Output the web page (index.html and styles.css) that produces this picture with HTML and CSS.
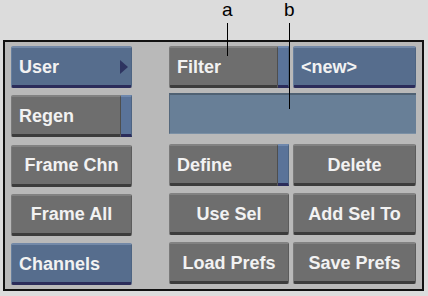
FILE: index.html
```html
<!DOCTYPE html>
<html>
    <head>
        <title>user prefs</title>
        <link rel="stylesheet" href="styles.css">
    </head>
    <body>
        <div class="callouts">
            <div class="callout ca"><span>a</span><i></i></div>
            <div class="callout cb"><span>b</span><i></i></div>
        </div>
        <div class="panel">
            <div class="left">
                <div class="btn blue start">User<span class="arrow"></span></div>
                <div class="btn start split"><span class="face">Regen</span><span class="ind"></span></div>
                <div class="btn">Frame Chn</div>
                <div class="btn">Frame All</div>
                <div class="btn blue start">Channels</div>
            </div>
            <div class="right">
                <div class="btn start split"><span class="face">Filter</span><span class="ind"></span></div>
                <div class="btn blue start">&lt;new&gt;</div>
                <div class="field"></div>
                <div class="btn start split"><span class="face">Define</span><span class="ind"></span></div>
                <div class="btn">Delete</div>
                <div class="btn">Use Sel</div>
                <div class="btn">Add Sel To</div>
                <div class="btn">Load Prefs</div>
                <div class="btn">Save Prefs</div>
            </div>
        </div>
    </body>
</html>
```

FILE: styles.css
```css
body {
    margin: 0;
    padding: 0;
    background: #dcdcdc;
    font-family: "Liberation Sans", Arial, sans-serif;
}

.callouts {
    position: relative;
    z-index: 1;
    height: 40px;
}

.callout {
    position: absolute;
    top: 0;
    display: flex;
    flex-direction: column;
    align-items: center;
    color: #000;
    font-size: 19px;
    line-height: 20px;
}

.callout i {
    display: block;
    width: 1px;
    margin-top: 3px;
    background: #000;
}

.ca {
    left: 222px;
}

.ca i {
    height: 33px;
}

.cb {
    left: 284px;
}

.cb i {
    height: 86px;
}

.panel {
    margin-left: 3px;
    width: 417px;
    height: 247px;
    border: 2px solid #111;
    background: #b9b9b9;
    display: flex;
}

.left {
    width: 121px;
    margin: 4px 37px 4px 6px;
    display: flex;
    flex-direction: column;
    justify-content: space-between;
}

.right {
    width: 247px;
    margin: 4px 0;
    display: grid;
    grid-template-columns: 120px 123px;
    grid-template-rows: repeat(5, 42px);
    column-gap: 4px;
    row-gap: 7px;
}

.btn {
    height: 42px;
    box-sizing: border-box;
    display: flex;
    align-items: center;
    justify-content: center;
    position: relative;
    background: #6e6e6e;
    border-top: 2px solid #828282;
    border-left: 1px solid #7a7a7a;
    border-right: 1px solid #5c5c5c;
    border-bottom: 3px solid #3c3c3c;
    border-radius: 2px;
    color: #f2f2f2;
    font-size: 18px;
    font-weight: bold;
    padding-top: 1px;
}

.btn.start {
    justify-content: flex-start;
    padding-left: 7px;
}

.btn.blue {
    background: #566d8d;
    border-top-color: #7389a8;
    border-left-color: #677f9e;
    border-right-color: #4d6482;
    border-bottom-color: #2b2c5a;
}

.arrow {
    position: absolute;
    right: 3px;
    top: 12px;
    width: 0;
    height: 0;
    border-top: 7px solid transparent;
    border-bottom: 7px solid transparent;
    border-left: 8px solid #2e3460;
}

.btn.split {
    padding: 0;
    border: none;
    background: none;
    align-items: stretch;
}

.face {
    flex: 1;
    display: flex;
    align-items: center;
    padding-left: 7px;
    padding-top: 1px;
    background: #6e6e6e;
    border-top: 2px solid #828282;
    border-left: 1px solid #7a7a7a;
    border-right: 1px solid #4e4e4e;
    border-bottom: 3px solid #3c3c3c;
    border-radius: 2px 0 0 2px;
}

.ind {
    width: 10px;
    background: #5a7399;
    border-top: 2px solid #6f88ad;
    border-bottom: 3px solid #2b2c5a;
    border-right: 1px solid #4d6482;
}

.field {
    grid-column: 1 / 3;
    height: 41px;
    box-sizing: border-box;
    background: #687f97;
    border-top: 2px solid #4f6173;
    border-left: 1px solid #55687c;
    border-bottom: 1px solid #7b90a5;
    margin-top: -2px;
}
```
